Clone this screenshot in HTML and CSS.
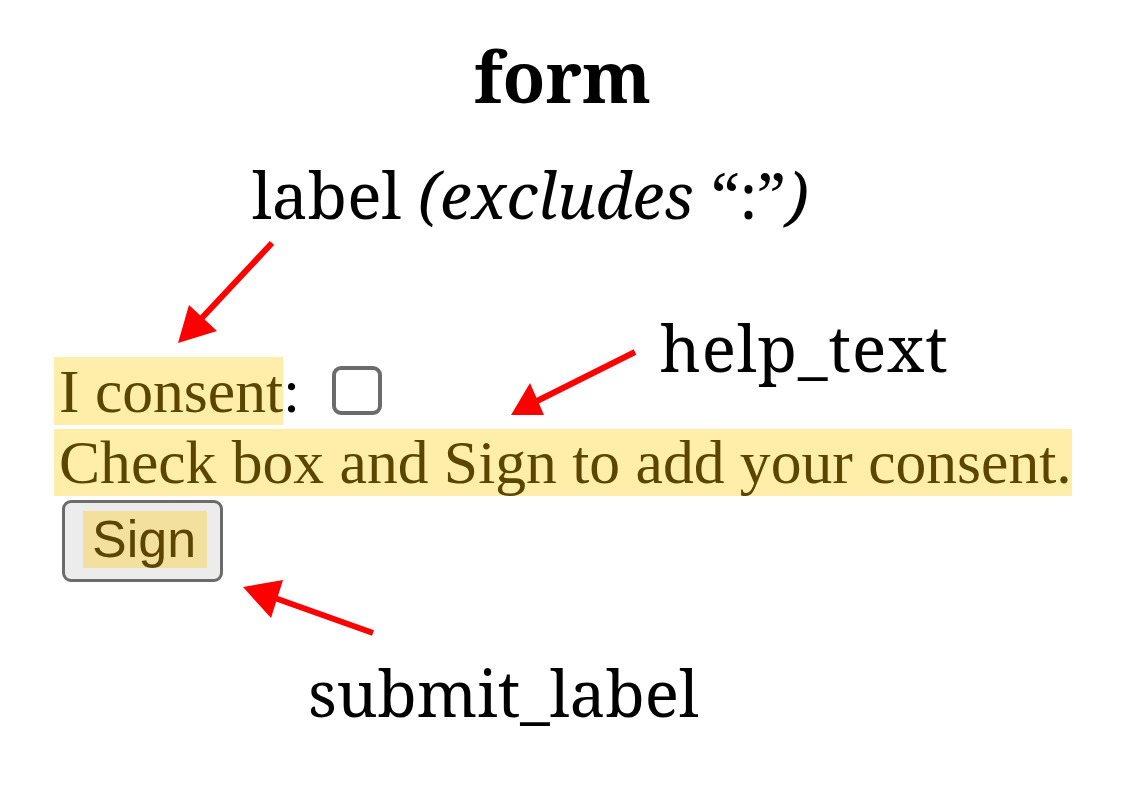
FILE: index.html
```html
<!DOCTYPE html>
<html>
<head>
<meta charset="utf-8">
<link rel="stylesheet" href="styles.css">
</head>
<body>
<div class="canvas">
  <h1 class="title">form</h1>
  <div class="note note-label">label <span class="it">(excludes</span> “:”<span class="it">)</span></div>
  <div class="note note-help">help_text</div>
  <div class="note note-submit">submit_label</div>

  <form class="form">
    <div class="row">
      <span class="hl">I consent</span><span class="colon">:</span>
      <input class="check" type="checkbox">
    </div>
    <div class="row row-help">
      <span class="hl">Check box and Sign to add your consent.</span>
    </div>
    <button class="btn" type="button"><span class="btn-hl">Sign</span></button>
  </form>

  <svg class="arrows" width="1147" height="792" viewBox="0 0 1147 792">
    <g stroke="#ff0000" stroke-width="6" fill="none">
      <line x1="272" y1="243" x2="200" y2="320"/>
      <line x1="635" y1="352" x2="535" y2="402"/>
      <line x1="373" y1="633" x2="272" y2="597"/>
    </g>
    <g fill="#ff0000">
      <polygon points="178,343 189,305 217,331"/>
      <polygon points="511,415 530,383 544,415"/>
      <polygon points="243,587 283,580 271,618"/>
    </g>
  </svg>
</div>
</body>
</html>
```

FILE: styles.css
```css
html, body {
  margin: 0;
  padding: 0;
  background: #ffffff;
}

.canvas {
  position: relative;
  width: 1147px;
  height: 792px;
  overflow: hidden;
}

.title {
  position: absolute;
  left: 0;
  right: 0;
  top: 34px;
  margin: 0;
  padding-right: 22px;
  text-align: center;
  font-family: "Noto Serif", "DejaVu Serif", "Liberation Serif", serif;
  font-weight: bold;
  font-size: 70px;
  line-height: 84px;
  color: #000;
}

.note {
  position: absolute;
  font-family: "Noto Serif", "DejaVu Serif", "Liberation Serif", serif;
  font-size: 64px;
  line-height: 70px;
  color: #000;
  white-space: nowrap;
}

.it {
  font-style: italic;
}

.note-label {
  left: 252px;
  top: 160px;
}

.note-help {
  left: 660px;
  top: 313px;
  letter-spacing: 1px;
}

.note-submit {
  left: 308px;
  top: 658px;
}

.form {
  margin: 0;
  padding: 357px 0 0 54px;
  font-family: "Liberation Serif", "Times New Roman", serif;
  font-size: 61.6px;
  color: #5a4600;
}

.row {
  display: flex;
  align-items: center;
  height: 68px;
}

.row-help {
  margin-top: 4px;
  height: 67px;
}

.hl {
  background: #ffedaa;
  line-height: 68px;
  padding-left: 5px;
  white-space: nowrap;
}

.row-help .hl {
  line-height: 67px;
}

.colon {
  color: #000;
}

.check {
  appearance: none;
  -webkit-appearance: none;
  box-sizing: border-box;
  width: 50px;
  height: 49px;
  margin: 0 0 2px 32px;
  border: 4px solid #6b6b6b;
  border-radius: 9px;
  background: #fff;
}

.btn {
  display: flex;
  align-items: center;
  box-sizing: border-box;
  width: 161px;
  height: 82px;
  margin: 4px 0 0 8px;
  padding: 0 0 3px 18px;
  border: 3px solid #6b6b6b;
  border-radius: 9px;
  background: #ececec;
}

.btn-hl {
  display: block;
  width: 124px;
  box-sizing: border-box;
  padding-left: 9px;
  background: #f4e09e;
  font-family: "Liberation Sans", Arial, sans-serif;
  font-size: 52px;
  line-height: 57px;
  color: #5a4600;
  text-align: left;
}

.arrows {
  position: absolute;
  left: 0;
  top: 0;
  pointer-events: none;
}
```
